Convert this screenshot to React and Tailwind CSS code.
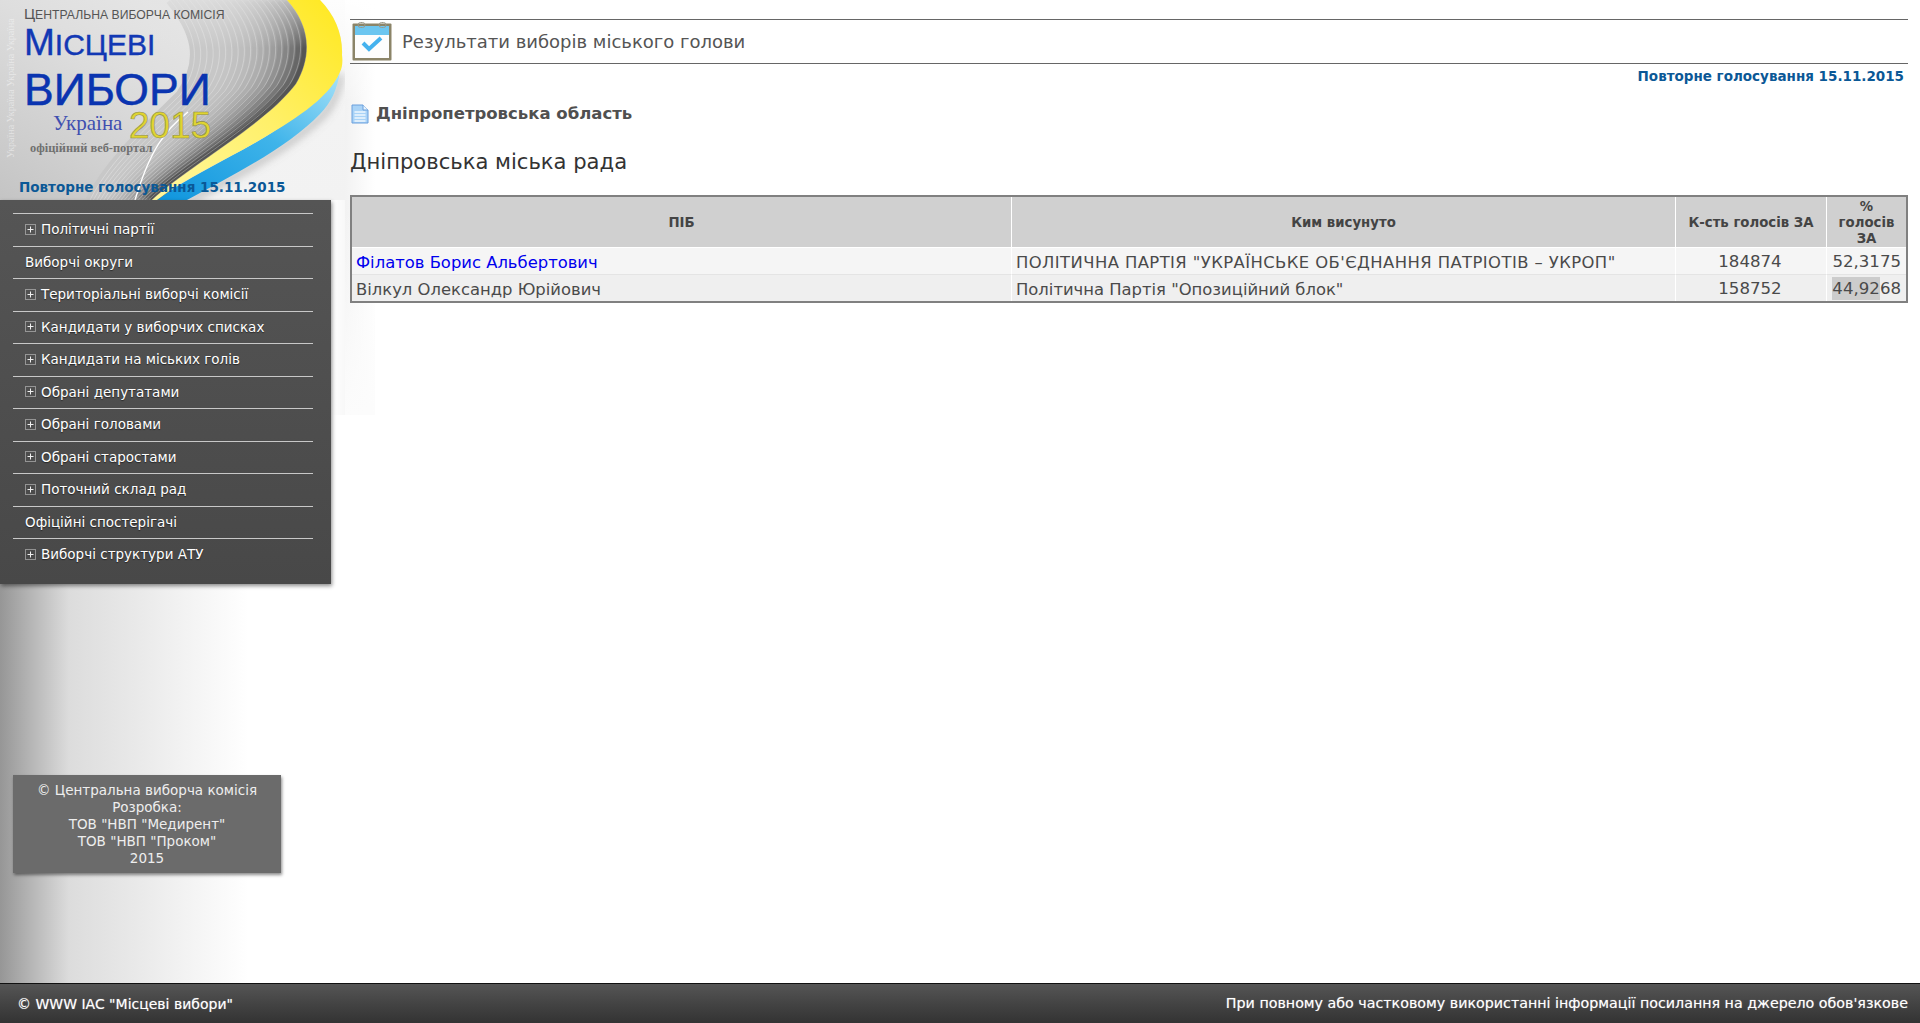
const font = "font-['DejaVu_Sans',sans-serif]";

const menu = [
  { label: "Політичні партії", plus: true },
  { label: "Виборчі округи" },
  { label: "Територіальні виборчі комісії", plus: true },
  { label: "Кандидати у виборчих списках", plus: true },
  { label: "Кандидати на міських голів", plus: true },
  { label: "Обрані депутатами", plus: true },
  { label: "Обрані головами", plus: true },
  { label: "Обрані старостами", plus: true },
  { label: "Поточний склад рад", plus: true },
  { label: "Офіційні спостерігачі" },
  { label: "Виборчі структури АТУ", plus: true },
];

function PlusBox() {
  return (
    <svg width="11" height="11" viewBox="0 0 11 11" className="shrink-0 mr-[5px]">
      <rect x="0.5" y="0.5" width="10" height="10" fill="none" stroke="#ddd" strokeDasharray="1 1" />
      <path d="M5.5 2.5v6M2.5 5.5h6" stroke="#f0f0f0" />
    </svg>
  );
}

// grey stripes of the swoosh: curves between the left side and the yellow edge
const edge = [287, 0, 310, 25, 313, 55, 296, 84, 265, 125, 190, 165, 152, 200];
const inner = [170, 0, 195, 30, 205, 60, 180, 95, 150, 125, 110, 160, 90, 200];
const stripes = Array.from({ length: 19 }, (_, i) => {
  const t = i / 18;
  const p = edge.map((v, k) => (inner[k] + (v - inner[k]) * t).toFixed(1));
  const shade = Math.round(200 - Math.pow(t, 3) * 115);
  return {
    d: `M${p[0]} ${p[1]}C${p[2]} ${p[3]} ${p[4]} ${p[5]} ${p[6]} ${p[7]}C${p[8]} ${p[9]} ${p[10]} ${p[11]} ${p[12]} ${p[13]}`,
    color: `rgb(${shade},${shade},${shade})`,
  };
});

function Logo() {
  return (
    <svg width="345" height="200" viewBox="0 0 345 200" className="block">
      <defs>
        <linearGradient id="bg" x1="0" y1="1" x2="1" y2="0">
          <stop offset="0" stopColor="#c4c4c4" />
          <stop offset="0.5" stopColor="#dedede" />
          <stop offset="1" stopColor="#eeeeee" />
        </linearGradient>
        <linearGradient id="fade" x1="0" y1="0" x2="0" y2="1">
          <stop offset="0" stopColor="#e4e4e4" stopOpacity="0.75" />
          <stop offset="1" stopColor="#e4e4e4" stopOpacity="0" />
        </linearGradient>
        <linearGradient id="outer" x1="0" y1="0" x2="0" y2="1">
          <stop offset="0" stopColor="#fdfdfd" />
          <stop offset="0.6" stopColor="#f3f3f3" />
          <stop offset="1" stopColor="#f2f2f2" />
        </linearGradient>
        <linearGradient id="yellow" x1="0" y1="1" x2="1" y2="0">
          <stop offset="0" stopColor="#fff8a0" />
          <stop offset="0.5" stopColor="#fff06a" />
          <stop offset="1" stopColor="#ffe81e" />
        </linearGradient>
        <linearGradient id="blue" x1="0" y1="1" x2="1" y2="0">
          <stop offset="0" stopColor="#0f95dd" />
          <stop offset="0.55" stopColor="#3fb4ea" />
          <stop offset="1" stopColor="#a8e2f8" />
        </linearGradient>
        <filter id="soft" x="-20%" y="-20%" width="140%" height="140%">
          <feGaussianBlur stdDeviation="4" />
        </filter>
      </defs>
      <rect width="345" height="200" fill="url(#bg)" />
      <g fill="none" strokeWidth="9">
        {stripes.map((s) => (
          <path key={s.d} d={s.d} stroke={s.color} />
        ))}
      </g>
      <g fill="none" stroke="#ffffff" strokeOpacity="0.28">
        {stripes.map((s) => (
          <path key={s.d} d={s.d} />
        ))}
      </g>
      <rect x="150" width="170" height="48" fill="url(#fade)" />
      <path d="M188 112C165 130 150 150 135 200" fill="none" stroke="#ffffff" strokeWidth="1.4" />
      <path d="M320 0H345V200H170C230 170 345 110 342 55C343 35 335 15 320 0Z" fill="url(#outer)" />
      <path d="M187 202C240 174 290 147 322 116C332 106 338 92 341 74" fill="none" stroke="#777777" strokeWidth="5" strokeOpacity="0.55" filter="url(#soft)" />
      <path d="M340 72C330 95 300 115 265 137C230 158 190 176 157 200H187C240 172 290 145 320 114C331 103 337 90 340 72Z" fill="url(#blue)" />
      <path d="M287 0H320C335 15 343 35 342 55C343 62 342 68 340 72C328 100 290 122 258 141C222 162 185 178 157 200H152C190 165 265 125 296 84C313 55 310 25 287 0Z" fill="url(#yellow)" />
      <text transform="translate(14 158) rotate(-90)" fontFamily="'Liberation Serif',serif" fontSize="10" fill="#ffffff" fillOpacity="0.45">
        Україна  Україна  Україна  Україна
      </text>
      <g fontFamily="'Liberation Sans',sans-serif">
        <text x="24" y="19" fontSize="12.2" fill="#555555">
          <tspan fontSize="15">Ц</tspan>ЕНТРАЛЬНА ВИБОРЧА КОМІСІЯ
        </text>
        <text x="24" y="55" fontSize="30" fill="#1238b4" stroke="#1238b4" strokeWidth="0.4">
          <tspan fontSize="37">М</tspan>ІСЦЕВІ
        </text>
        <text x="24" y="105" fontSize="44.5" fill="#0a34b0" stroke="#0a34b0" strokeWidth="0.5">ВИБОРИ</text>
        <text x="129" y="138" fontSize="37" fill="#e0d430" stroke="#8c8c50" strokeWidth="0.6">2015</text>
      </g>
      <g fontFamily="'Liberation Serif',serif">
        <text x="53" y="130" fontSize="21" fill="#3f4fb0">Україна</text>
        <text x="30" y="152" fontSize="12.4" fontWeight="700" fill="#707070">офіційний веб-портал</text>
      </g>
      <text x="19" y="192" fontFamily="'DejaVu Sans',sans-serif" fontSize="13.5" fontWeight="700" fill="#0b5896">
        Повторне голосування 15.11.2015
      </text>
    </svg>
  );
}

function Sidebar() {
  return (
    <aside className="w-[345px] shrink-0 flex flex-col">
      <Logo />
      <div className="flex-1 flex flex-col bg-no-repeat bg-[linear-gradient(to_right,#ffffff00_96%,#f8f8f8),linear-gradient(to_right,#969696,#dcdcdc_20%,#ffffff_72%)] bg-[size:100%_215px,100%_100%]">
        <nav className="w-[331px] h-[384px] pt-[13px] pl-[13px] pr-[18px] bg-gradient-to-b from-[#555555] to-[#484848] shadow-[1px_2px_4px_rgba(0,0,0,0.45)]">
          {menu.map((item) => (
            <div
              key={item.label}
              className="h-[32.5px] border-t border-[#c8c8c8] pl-[12px] pb-[1px] flex items-center text-[13.5px] text-white [text-shadow:0_1px_1px_rgba(0,0,0,0.5)]"
            >
              {item.plus && <PlusBox />}
              {item.label}
            </div>
          ))}
        </nav>
        <div className="mt-[191px] ml-[13px] w-[268px] h-[98px] pt-[7px] bg-[#6b6b6b] shadow-[1px_2px_3px_rgba(0,0,0,0.45)] text-center text-[13.5px] leading-[17px] text-[#eeeeee]">
          <div>© Центральна виборча комісія</div>
          <div>Розробка:</div>
          <div>ТОВ "НВП "Медирент"</div>
          <div>ТОВ "НВП "Проком"</div>
          <div>2015</div>
        </div>
      </div>
    </aside>
  );
}

function ResultIcon() {
  return (
    <svg width="40" height="39" viewBox="0 0 40 39" className="shrink-0">
      <rect x="0.5" y="1.5" width="39" height="37" rx="1" fill="#8b8468" />
      <rect x="3" y="4" width="34" height="32" fill="#fdfdfd" />
      <rect x="3" y="4" width="34" height="9" fill="#6cc6f0" />
      <rect x="6" y="0.5" width="7" height="5" rx="2.5" fill="none" stroke="#9a9a8c" />
      <rect x="27" y="0.5" width="7" height="5" rx="2.5" fill="none" stroke="#9a9a8c" />
      <path d="M11 21l6 6 12-11" fill="none" stroke="#45b2ee" strokeWidth="4" />
    </svg>
  );
}

function DocIcon() {
  return (
    <svg width="18" height="20" viewBox="0 0 18 20" className="shrink-0">
      <path d="M1 1h11l5 5v13H1z" fill="#a9d3f7" stroke="#6a9fdc" />
      <path d="M12 1v5h5" fill="#e6f3fd" stroke="#6a9fdc" />
      <path d="M3.5 8h11M3.5 11h11M3.5 14h11M3.5 17h11" stroke="#eef7fe" strokeWidth="1.4" />
    </svg>
  );
}

function ResultsTable() {
  const head = "bg-[#d0d0d0] text-[13.3px] font-bold text-[#444444] text-center leading-4 px-1 pt-[2px] border-r border-b border-white last:border-r-0";
  const cell = "pl-[4px] pr-[3px] pt-[4px] text-[16.4px] text-[#4a4a4a] leading-none border-r border-white last:border-r-0";
  const num = "pl-[3px] pr-[5px] pt-[4px] text-[16.6px] text-[#4a4a4a] leading-none border-r border-white last:border-r-0";
  return (
    <table className="w-[1558px] mt-[19px] border-2 border-[#808080] border-separate border-spacing-0 table-fixed">
      <colgroup>
        <col className="w-[660px]" />
        <col className="w-[664px]" />
        <col className="w-[151px]" />
        <col className="w-[79px]" />
      </colgroup>
      <thead>
        <tr className="h-[51px]">
          <th className={head}>ПІБ</th>
          <th className={head}>Ким висунуто</th>
          <th className={head}>К-сть голосів ЗА</th>
          <th className={head}>% голосів ЗА</th>
        </tr>
      </thead>
      <tbody>
        <tr className="h-[27px] bg-[#f5f5f5] [&>td]:border-b [&>td]:border-b-[#e4e4e4]">
          <td className={cell}>
            <span className="text-[#0000ee]">Філатов Борис Альбертович</span>
          </td>
          <td className={cell + " tracking-[0.43px]"}>ПОЛІТИЧНА ПАРТІЯ "УКРАЇНСЬКЕ ОБ'ЄДНАННЯ ПАТРІОТІВ – УКРОП"</td>
          <td className={num + " text-center"}>184874</td>
          <td className={num + " text-right"}>52,3175</td>
        </tr>
        <tr className="h-[26px] bg-[#efefef]">
          <td className={cell}>Вілкул Олександр Юрійович</td>
          <td className={cell}>Політична Партія "Опозиційний блок"</td>
          <td className={num + " text-center"}>158752</td>
          <td className={num + " text-right"}>
            <span className="bg-[#cccccc] py-[2px]">44,92</span>68
          </td>
        </tr>
      </tbody>
    </table>
  );
}

export default function App() {
  return (
    <div className={"h-[1023px] flex flex-col bg-white overflow-hidden " + font}>
      <div className="flex-1 flex min-h-0">
        <Sidebar />
        <main className="flex-1 pt-[19px] pl-[5px] pr-[12px] bg-no-repeat bg-[linear-gradient(to_bottom,#ffffff,#ffffff00_25%,#ffffff00_50%,#fcfcfc),linear-gradient(to_right,#f2f2f2,#ffffff)] bg-[size:30px_415px]">
          <div className="h-[45px] border-y border-[#666666] flex items-center pl-[2px]">
            <ResultIcon />
            <h1 className="ml-[10px] text-[18px] font-normal text-[#555555]">Результати виборів міського голови</h1>
          </div>
          <p className="mt-[3px] pr-[4px] text-right text-[13.5px] font-bold leading-[18px] text-[#0b5896]">
            Повторне голосування 15.11.2015
          </p>
          <div className="mt-[17px] flex items-center pl-[1px]">
            <DocIcon />
            <h2 className="ml-[7px] text-[16.5px] font-bold text-[#505050]">Дніпропетровська область</h2>
          </div>
          <h3 className="mt-[21px] text-[21.1px] font-normal leading-7 text-[#333333]">Дніпровська міська рада</h3>
          <ResultsTable />
        </main>
      </div>
      <footer className="h-[40px] shrink-0 pt-[1px] flex items-center justify-between pl-[17px] pr-[12px] border-t border-[#111111] bg-gradient-to-b from-[#555555] to-[#333333] text-white [text-shadow:0_0_1px_rgba(255,255,255,0.5)]">
        <span className="text-[14px]">© WWW IAC "Місцеві вибори"</span>
        <span className="text-[14.25px]">При повному або частковому використанні інформації посилання на джерело обов'язкове</span>
      </footer>
    </div>
  );
}
